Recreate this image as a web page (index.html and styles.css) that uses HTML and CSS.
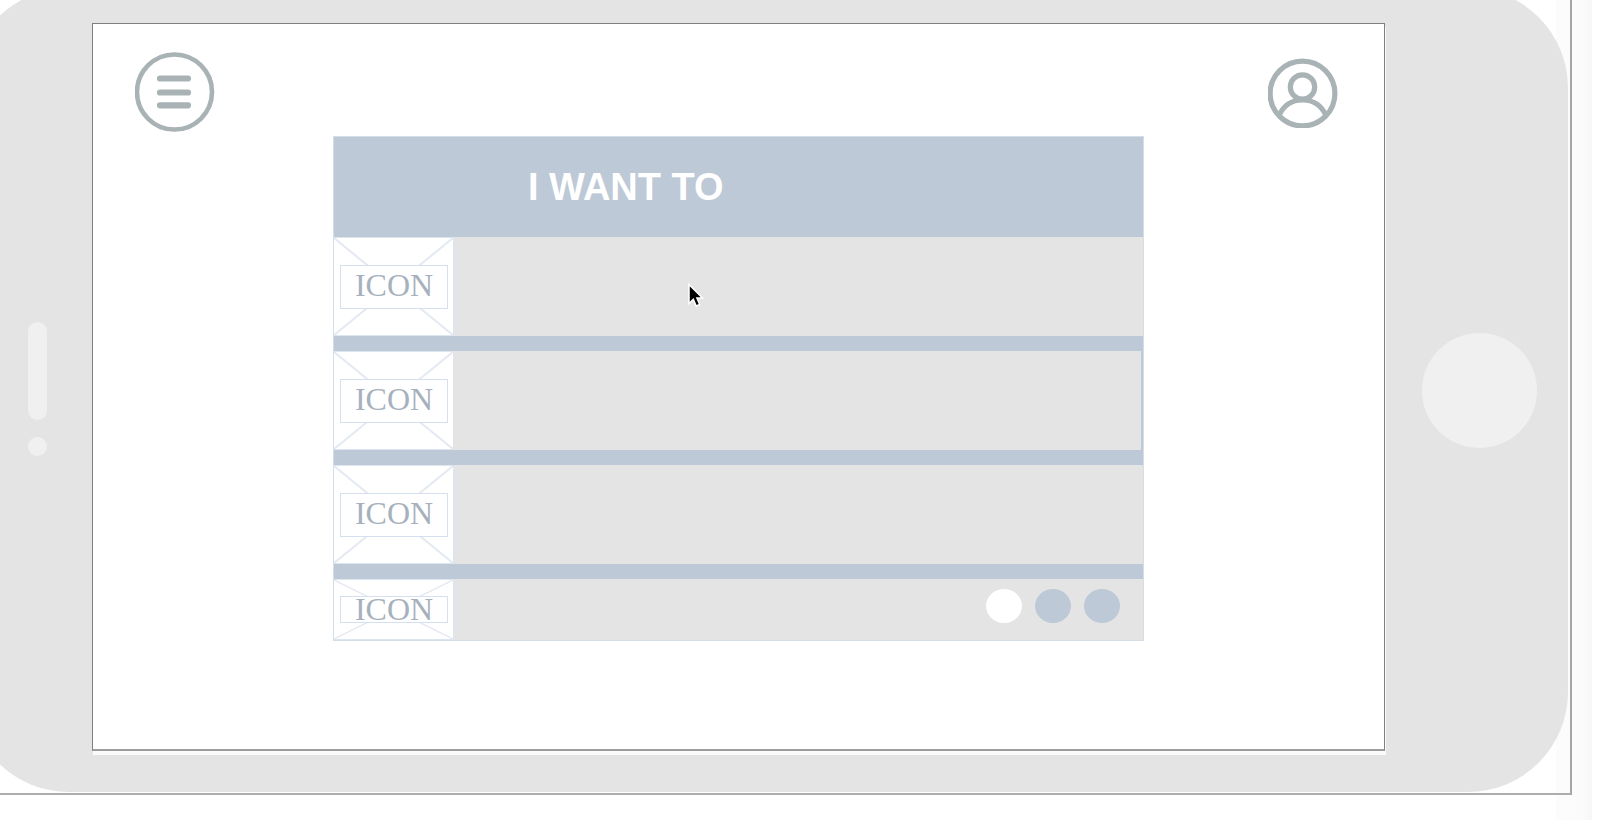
FILE: index.html
```html
<!DOCTYPE html>
<html lang="en">
<head>
  <meta charset="utf-8">
  <meta name="viewport" content="width=device-width, initial-scale=1">
  <title>I want to</title>
  <link rel="stylesheet" href="styles.css">
</head>
<body>
  <div class="frame">
    <div class="device">
      <div class="bezel bezel-left">
        <span class="speaker"></span>
        <span class="sensor"></span>
      </div>
      <div class="screen">
        <header class="topbar">
          <button class="icon-button" type="button" aria-label="Menu">
            <svg width="80" height="80" viewBox="0 0 80 80" fill="none" stroke="#a9b3b5">
              <circle cx="39.500" cy="40" r="37.500" stroke-width="4.600"/>
              <path d="M25 26.500H53M25 40.500H53M25 53.300H53" stroke-width="6.200" stroke-linecap="round"/>
            </svg>
          </button>
          <button class="icon-button" type="button" aria-label="Profile">
            <svg width="70" height="72" viewBox="0 0 70 72" fill="none" stroke="#a9b3b5" stroke-width="5.200">
              <circle cx="34.500" cy="37.500" r="32.400"/>
              <circle cx="34.500" cy="31" r="12.200"/>
              <path d="M11 59.500C15.500 49.500 23.500 44 34.500 44S53.500 49.500 58 59.500"/>
            </svg>
          </button>
        </header>
        <main class="content">
          <section class="card">
            <h1 class="card-title">I WANT TO</h1>
            <ul class="list">
              <li class="item">
                <div class="thumb">
                  <svg class="cross" viewBox="0 0 100 100" preserveAspectRatio="none"><path d="M0 0L100 100M100 0L0 100"/></svg>
                  <span class="thumb-label">ICON</span>
                </div>
                <svg class="cursor" width="20" height="28" viewBox="0 0 20 28">
                  <path d="M2 1.500V20.500L6.300 16.400L9.200 23L12.700 21.500L9.900 15H15.500Z" fill="#000" stroke="#fff" stroke-width="1.500"/>
                </svg>
              </li>
              <li class="item item-inset">
                <div class="thumb">
                  <svg class="cross" viewBox="0 0 100 100" preserveAspectRatio="none"><path d="M0 0L100 100M100 0L0 100"/></svg>
                  <span class="thumb-label">ICON</span>
                </div>
              </li>
              <li class="item">
                <div class="thumb">
                  <svg class="cross" viewBox="0 0 100 100" preserveAspectRatio="none"><path d="M0 0L100 100M100 0L0 100"/></svg>
                  <span class="thumb-label">ICON</span>
                </div>
              </li>
              <li class="item item-short">
                <div class="thumb">
                  <svg class="cross" viewBox="0 0 100 100" preserveAspectRatio="none"><path d="M0 0L100 100M100 0L0 100"/></svg>
                  <span class="thumb-label">ICON</span>
                </div>
                <div class="pager">
                  <button class="dot dot-current" type="button" aria-label="Page 1" aria-current="true"></button>
                  <button class="dot" type="button" aria-label="Page 2"></button>
                  <button class="dot" type="button" aria-label="Page 3"></button>
                </div>
              </li>
            </ul>
          </section>
        </main>
      </div>
      <div class="bezel bezel-right">
        <button class="home" type="button" aria-label="Home"></button>
      </div>
    </div>
  </div>
</body>
</html>
```

FILE: styles.css
```css
* {
  box-sizing: border-box;
}

body {
  display: flex;
  height: 100vh;
  margin: 0;
  padding: 0 34px 25px 0;
  overflow: hidden;
  background: linear-gradient(to left, #fff 14px, #f7f7f7 14px, #fbfbfb 24px, #fcfcfc 50px, #fff 50px);
  font-family: "Liberation Sans", Arial, sans-serif;
}

button {
  padding: 0;
  border: 0;
  background: none;
}

.frame {
  display: flex;
  flex: 1;
  border-right: 2px solid #a6a6a6;
  border-bottom: 2px solid #adadad;
}

/* The handset runs past the top and left edges of the window. */
.device {
  display: grid;
  flex: 1;
  grid-template-columns: 123px 1fr 183px;
  margin: -12px 2px 1px -31px;
  padding: 35px 0 41px;
  border-radius: 100px;
  background: #e4e4e4;
}

.bezel {
  display: flex;
  flex-direction: column;
  align-items: center;
  justify-content: center;
}

.bezel-left {
  gap: 17px;
  padding: 4px 0 0 14px;
}

.bezel-right {
  padding: 7px 0 0 5px;
}

.speaker,
.sensor {
  width: 19px;
  border-radius: 10px;
  background: #f0f0f0;
}

.speaker {
  height: 98px;
}

.sensor {
  height: 19px;
}

.home {
  width: 115px;
  height: 115px;
  border-radius: 50%;
  background: #f0f0f0;
}

.screen {
  border: 1px solid #808080;
  border-bottom: 2px solid #9c9c9c;
  background: #fff;
  box-shadow: 1px 4px 0 #fafafa;
}

.topbar {
  display: flex;
  align-items: center;
  justify-content: space-between;
  padding: 28px 46px 0 42px;
}

.icon-button svg {
  display: block;
}

.content {
  padding: 4px 240px 0;
}

.card {
  border: 1px solid #d5dde6;
  background: #bdc9d6;
}

.card-title {
  margin: 0;
  padding-left: 194px;
  color: #fff;
  font-size: 38px;
  line-height: 100px;
}

.list {
  display: grid;
  gap: 15px;
  margin: 0;
  padding: 0;
  list-style: none;
}

.item {
  position: relative;
  display: flex;
  justify-content: space-between;
  min-height: 99px;
  background: #e4e4e4;
}

.item-inset {
  margin-right: 2px;
}

.item-short {
  min-height: 61px;
}

.thumb {
  position: relative;
  display: flex;
  align-items: center;
  width: 121px;
  padding: 0 5px 0 6px;
  border: solid #dde5ef;
  border-width: 1px 2px 1px 0;
  background: #fff;
}

.item-inset .thumb {
  width: 119px;
  border-right-width: 0;
}

.cross {
  position: absolute;
  inset: 0;
  width: 100%;
  height: 100%;
  fill: none;
  stroke: #e4e9f2;
  stroke-width: 2;
}

.thumb-label {
  position: relative;
  flex: 1;
  padding-bottom: 3px;
  border: 1px solid #d5e0ee;
  background: #fff;
  color: #a6b1bd;
  font-family: "Liberation Serif", "Times New Roman", serif;
  font-size: 32px;
  line-height: 39px;
  text-align: center;
}

.item-short .thumb-label {
  padding-bottom: 0;
  line-height: 25px;
}

.cursor {
  position: absolute;
  top: 46px;
  left: 353px;
}

.pager {
  display: flex;
  gap: 13px;
  padding: 10px 23px 0 0;
}

.dot {
  width: 36px;
  height: 34px;
  border-radius: 50%;
  background: #bdc9d6;
}

.dot-current {
  background: #fff;
}
```
